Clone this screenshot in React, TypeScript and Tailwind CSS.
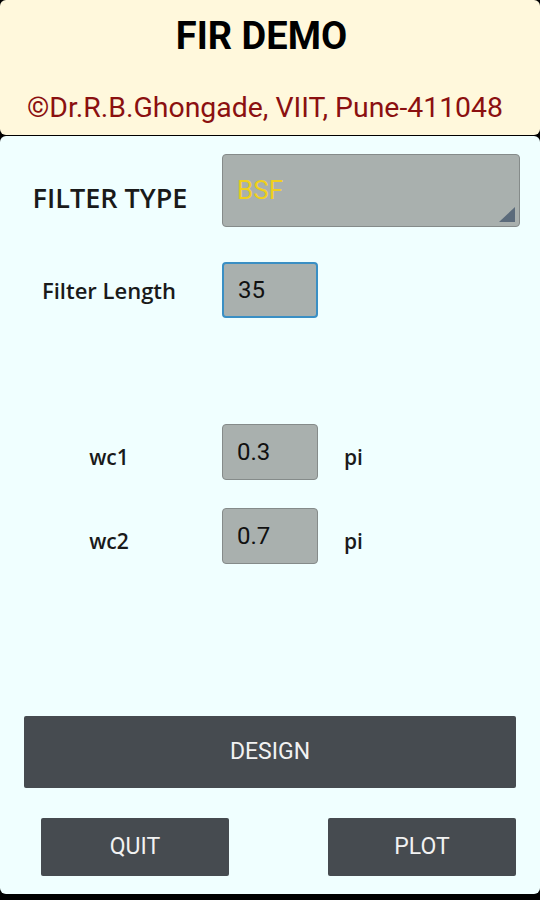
import React from 'react'

const labelFont = { fontFamily: '"Open Sans", "Noto Sans", sans-serif' }
const roboto = { fontFamily: 'Roboto, "Liberation Sans", sans-serif' }

function ValueBox({ value, focused }: { value: string; focused?: boolean }) {
  return (
    <div
      className={
        'w-[96px] h-[56px] rounded-[4px] bg-[#a9b0ae] flex items-center pl-[14px] text-[24px] text-[#111] ' +
        (focused ? 'border-2 border-[#3a8fc4]' : 'border border-[#858b8a]')
      }
      style={roboto}
    >
      {value}
    </div>
  )
}

function Row({ label, shift, children }: { label: string; shift?: boolean; children: React.ReactNode }) {
  return (
    <div className="flex items-center">
      <div
        className={'w-[218px] text-center text-[21px] font-semibold text-[#1a1a1a] ' + (shift ? 'pt-[12px]' : '')}
        style={labelFont}
      >
        {label}
      </div>
      <div className="ml-[4px] flex items-center">{children}</div>
    </div>
  )
}

export default function App() {
  return (
    <div className="w-[540px] h-[900px] bg-black flex flex-col overflow-hidden">
      {/* title panel */}
      <div className="h-[135px] bg-[#fff8dc] rounded-[6px] flex flex-col items-center" style={roboto}>
        <div className="mt-[12px] pr-[17px] text-[38px] font-bold text-black leading-[48px]">FIR DEMO</div>
        <div className="mt-[31px] pr-[10px] text-[28.4px] text-[#8b1010] leading-[34px]">©Dr.R.B.Ghongade, VIIT, Pune-411048</div>
      </div>

      {/* form panel */}
      <div className="mt-[1px] h-[758px] bg-[#f0ffff] rounded-[6px] flex flex-col">
        <div className="mt-[18px] flex items-center">
          <div className="w-[220px] pt-[16px] text-center text-[27px] font-semibold text-[#1a1a1a]" style={labelFont}>
            FILTER TYPE
          </div>
          <div className="ml-[2px] relative w-[298px] h-[73px] rounded-[4px] bg-[#a9b0ae] border border-[#858b8a] pl-[14px] pt-[19px]">
            <span className="text-[26px] text-[#f0d01c] leading-[32px]" style={roboto}>BSF</span>
            <svg className="absolute right-[4px] bottom-[4px]" width="16" height="15" viewBox="0 0 16 15">
              <polygon points="0,15 16,0 16,15" fill="#5b6b7b" />
            </svg>
          </div>
        </div>

        <div className="mt-[35px] flex items-center">
          <div className="w-[218px] text-center text-[22px] font-semibold text-[#1a1a1a]" style={labelFont}>
            Filter Length
          </div>
          <div className="ml-[4px]">
            <ValueBox value="35" focused />
          </div>
        </div>

        <div className="mt-[106px]">
          <Row label="wc1" shift>
            <ValueBox value="0.3" />
            <span className="ml-[26px] pt-[12px] text-[21px] font-semibold text-[#1a1a1a]" style={labelFont}>pi</span>
          </Row>
        </div>

        <div className="mt-[28px]">
          <Row label="wc2" shift>
            <ValueBox value="0.7" />
            <span className="ml-[26px] pt-[12px] text-[21px] font-semibold text-[#1a1a1a]" style={labelFont}>pi</span>
          </Row>
        </div>

        <div className="mt-[152px] mx-[24px] h-[72px] bg-[#464b50] rounded-[2px] flex items-center justify-center text-[23px] text-[#f2f2f2]" style={roboto}>
          DESIGN
        </div>

        <div className="mt-[30px] flex justify-between pl-[41px] pr-[24px]">
          <div className="w-[188px] h-[58px] bg-[#464b50] rounded-[2px] flex items-center justify-center text-[23px] text-[#f2f2f2]" style={roboto}>
            QUIT
          </div>
          <div className="w-[188px] h-[58px] bg-[#464b50] rounded-[2px] flex items-center justify-center text-[23px] text-[#f2f2f2]" style={roboto}>
            PLOT
          </div>
        </div>
      </div>
    </div>
  )
}
